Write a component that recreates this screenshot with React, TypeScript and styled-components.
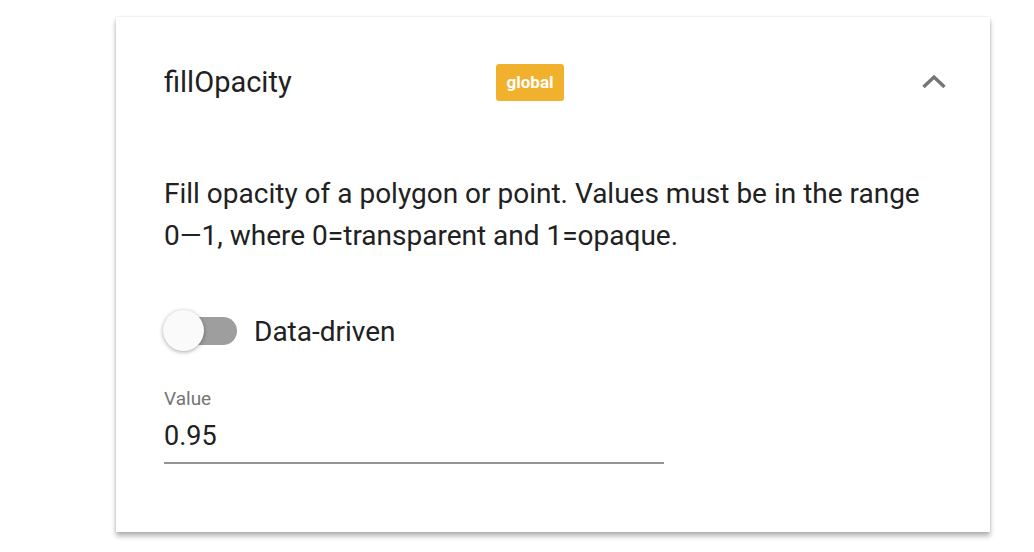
import React from 'react'
import styled, { createGlobalStyle } from 'styled-components'

const GlobalStyle = createGlobalStyle`
  body {
    margin: 0;
    background: #ffffff;
    font-family: Roboto, "Liberation Sans", sans-serif;
  }
`

const Page = styled.div`
  padding: 17px 44px 20px 116px;
`

const Card = styled.div`
  width: 874px;
  height: 515px;
  box-sizing: border-box;
  background: #fff;
  box-shadow: 0 4px 5px rgba(0, 0, 0, 0.3), 0 0 2px rgba(0, 0, 0, 0.12);
  padding: 44px 44px 0 48px;
`

const Header = styled.div`
  display: flex;
  align-items: center;
  height: 42px;
`

const Title = styled.div`
  width: 332px;
  font-size: 29px;
  color: #212121;
`

const Badge = styled.span`
  background: #f2b12d;
  color: #fff;
  font-weight: 700;
  font-size: 17px;
  border-radius: 3px;
  height: 37px;
  width: 68px;
  display: flex;
  align-items: center;
  justify-content: center;
`

const Toggle = styled.button`
  margin-left: auto;
  background: none;
  border: none;
  padding: 0;
  display: flex;
  cursor: pointer;
`

const Description = styled.p`
  margin: 70px 0 0;
  font-size: 28px;
  line-height: 42px;
  color: #212121;
  max-width: 770px;
`

const NoWrap = styled.span`
  white-space: nowrap;
`

const SwitchRow = styled.label`
  display: flex;
  align-items: center;
  gap: 17px;
  margin-top: 53px;
  font-size: 28px;
  color: #212121;
`

const Switch = styled.span`
  position: relative;
  width: 73px;
  height: 42px;
  display: flex;
  align-items: center;
`

const Track = styled.span`
  width: 71px;
  height: 28px;
  margin-left: 2px;
  border-radius: 14px;
  background: #9e9e9e;
`

const Thumb = styled.span`
  position: absolute;
  left: -1px;
  top: 0;
  width: 41px;
  height: 41px;
  border-radius: 50%;
  background: #fafafa;
  box-shadow: 0 1px 4px rgba(0, 0, 0, 0.35);
`

const Field = styled.div`
  margin-top: 35px;
  width: 500px;
`

const FieldLabel = styled.div`
  font-size: 19px;
  color: #757575;
`

const FieldInput = styled.div`
  font-size: 27px;
  color: #212121;
  padding: 10px 0 10px;
  border-bottom: 2px solid #949494;
`

export default function App() {
  return (
    <>
      <GlobalStyle />
      <Page>
        <Card>
          <Header>
            <Title>fillOpacity</Title>
            <Badge>global</Badge>
            <Toggle aria-label="Collapse">
              <svg width="24" height="16" viewBox="0 0 24 16">
                <path d="M1.5 13 L12 3 L22.5 13" fill="none" stroke="#757575" strokeWidth="3.4" />
              </svg>
            </Toggle>
          </Header>
          <Description>
            Fill opacity of a polygon or point. Values must be in the range <NoWrap>0—1,</NoWrap> where
            0=transparent and 1=opaque.
          </Description>
          <SwitchRow>
            <Switch>
              <Track />
              <Thumb />
            </Switch>
            Data-driven
          </SwitchRow>
          <Field>
            <FieldLabel>Value</FieldLabel>
            <FieldInput>0.95</FieldInput>
          </Field>
        </Card>
      </Page>
    </>
  )
}
